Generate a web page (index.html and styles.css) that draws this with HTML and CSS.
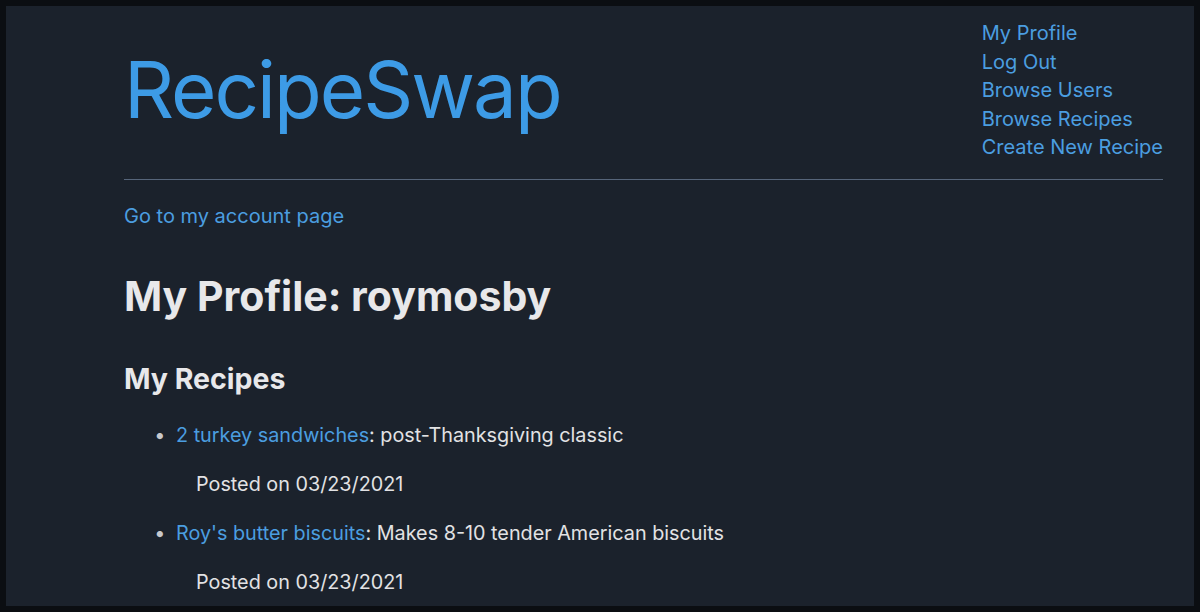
FILE: index.html
```html
<!DOCTYPE html>
<html lang="en">
<head>
<meta charset="utf-8">
<title>RecipeSwap</title>
<link rel="stylesheet" href="styles.css">
</head>
<body>
<div class="frame">
  <div class="page">
    <header class="header">
      <h1 class="brand">RecipeSwap</h1>
      <nav class="nav">
        <a href="#">My Profile</a>
        <a href="#">Log Out</a>
        <a href="#">Browse Users</a>
        <a href="#">Browse Recipes</a>
        <a href="#">Create New Recipe</a>
      </nav>
    </header>
    <hr class="rule">
    <a class="account" href="#">Go to my account page</a>
    <h2 class="title">My Profile: roymosby</h2>
    <h3 class="subtitle">My Recipes</h3>
    <ul class="recipes">
      <li>
        <a href="#">2 turkey sandwiches</a>: post-Thanksgiving classic
        <p class="posted">Posted on 03/23/2021</p>
      </li>
      <li>
        <a href="#">Roy's butter biscuits</a>: Makes 8-10 tender American biscuits
        <p class="posted">Posted on 03/23/2021</p>
      </li>
    </ul>
  </div>
</div>
</body>
</html>
```

FILE: styles.css
```css
html, body {
  margin: 0;
  padding: 0;
  background: #0a0d11;
}
body {
  font-family: Inter, "Noto Sans", "Liberation Sans", sans-serif;
  color: #e2e2e4;
}
.frame {
  box-sizing: border-box;
  width: 1200px;
  height: 612px;
  border: 6px solid #0b0e12;
  background: #1b222c;
  overflow: hidden;
}
.page {
  padding: 0 31px 0 118px;
}
a {
  color: #4b9ee0;
  text-decoration: none;
}
.header {
  display: flex;
  justify-content: space-between;
  align-items: flex-start;
}
.brand {
  margin: 36px 0 0 0;
  font-size: 78px;
  font-weight: 400;
  line-height: 96px;
  color: #3d9be6;
  letter-spacing: -2px;
}
.nav {
  display: flex;
  flex-direction: column;
  white-space: nowrap;
  margin-top: 13px;
  font-size: 20px;
  line-height: 28.5px;
}
.rule {
  margin: 17px 0 0 0;
  border: none;
  border-top: 1px solid #56657a;
  height: 0;
}
.account {
  display: inline-block;
  margin-top: 22px;
  font-size: 20px;
  line-height: 28px;
}
.title {
  margin: 42px 0 0 0;
  font-size: 41px;
  font-weight: 700;
  line-height: 48px;
  color: #e8e8ea;
}
.subtitle {
  margin: 41px 0 0 0;
  font-size: 28.5px;
  font-weight: 700;
  line-height: 36px;
  color: #e8e8ea;
}
.recipes {
  margin: 24px 0 0 0;
  padding-left: 52px;
  font-size: 19.8px;
  line-height: 28px;
}
.recipes li {
  margin: 0;
}
.recipes li::marker {
  content: "\2022   ";
  color: #c8c8cc;
}
.posted {
  margin: 21px 0 21px 20px;
}
```
